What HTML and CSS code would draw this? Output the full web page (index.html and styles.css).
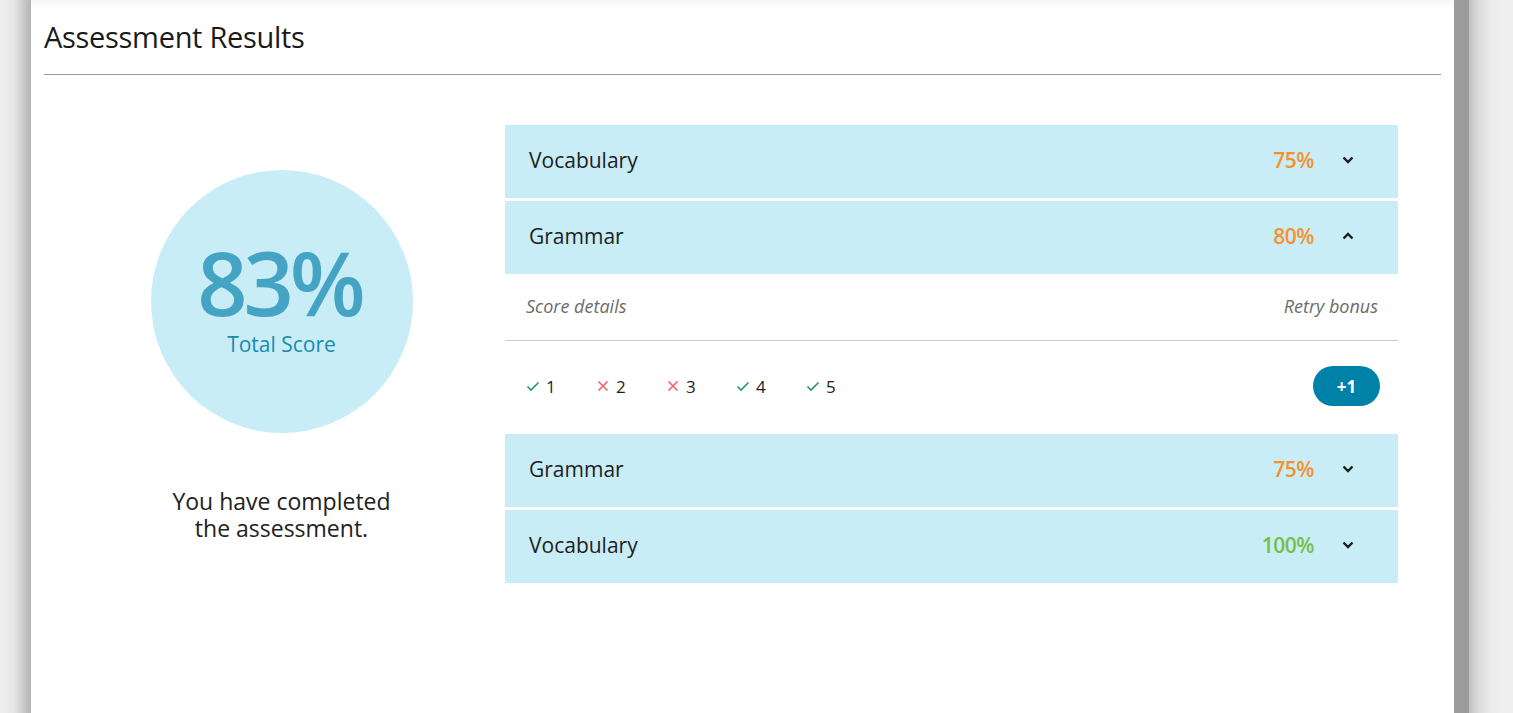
FILE: index.html
```html
<!DOCTYPE html>
<html lang="en">
<head>
<meta charset="utf-8">
<title>Assessment Results</title>
<link rel="stylesheet" href="styles.css">
</head>
<body>
<div class="stage">
  <div class="gutter gutter-left"></div>
  <main class="panel">
    <h1 class="title">Assessment Results</h1>
    <div class="results">
      <section class="summary">
        <div class="score-circle">
          <div class="score-value">83%</div>
          <div class="score-label">Total Score</div>
        </div>
        <p class="complete-msg">You have completed<br>the assessment.</p>
      </section>

      <section class="accordion">
        <div class="acc-row">
          <span class="acc-name">Vocabulary</span>
          <span class="acc-pct pct-orange">75%</span>
          <svg class="chev" viewBox="0 0 12 8"><path d="M1.5 1.5 L6 6 L10.5 1.5"/></svg>
        </div>
        <div class="acc-row">
          <span class="acc-name">Grammar</span>
          <span class="acc-pct pct-orange">80%</span>
          <svg class="chev" viewBox="0 0 12 8"><path d="M1.5 6.5 L6 2 L10.5 6.5"/></svg>
        </div>
        <div class="acc-body">
          <div class="detail-head">
            <span>Score details</span>
            <span>Retry bonus</span>
          </div>
          <div class="detail-items">
            <ul class="answers">
              <li><svg class="mark ok" viewBox="0 0 14 14"><path d="M1.5 7.5 L5 11 L12.5 3.5"/></svg>1</li>
              <li><svg class="mark bad" viewBox="0 0 14 14"><path d="M2.5 2.5 L11.5 11.5 M11.5 2.5 L2.5 11.5"/></svg>2</li>
              <li><svg class="mark bad" viewBox="0 0 14 14"><path d="M2.5 2.5 L11.5 11.5 M11.5 2.5 L2.5 11.5"/></svg>3</li>
              <li><svg class="mark ok" viewBox="0 0 14 14"><path d="M1.5 7.5 L5 11 L12.5 3.5"/></svg>4</li>
              <li><svg class="mark ok" viewBox="0 0 14 14"><path d="M1.5 7.5 L5 11 L12.5 3.5"/></svg>5</li>
            </ul>
            <span class="bonus">+1</span>
          </div>
        </div>
        <div class="acc-row">
          <span class="acc-name">Grammar</span>
          <span class="acc-pct pct-orange">75%</span>
          <svg class="chev" viewBox="0 0 12 8"><path d="M1.5 1.5 L6 6 L10.5 1.5"/></svg>
        </div>
        <div class="acc-row">
          <span class="acc-name">Vocabulary</span>
          <span class="acc-pct pct-green">100%</span>
          <svg class="chev" viewBox="0 0 12 8"><path d="M1.5 1.5 L6 6 L10.5 1.5"/></svg>
        </div>
      </section>
    </div>
  </main>
  <div class="edge"></div>
  <div class="gutter gutter-right"></div>
</div>
</body>
</html>
```

FILE: styles.css
```css
html, body {
  margin: 0;
  padding: 0;
  height: 100%;
}

body {
  background: #efefef;
  font-family: "Open Sans", "Liberation Sans", sans-serif;
  color: #222;
  overflow: hidden;
}

.stage {
  display: flex;
  height: 713px;
}

.gutter {
  flex: none;
}

.gutter-left {
  width: 31px;
  background: linear-gradient(to right, #efefef 0%, #e6e6e6 45%, #b4b4b4 100%);
}

.gutter-right {
  flex: 1;
  background: linear-gradient(to right, #c2c2c2 0px, #dcdcdc 10px, #ebebeb 22px, #efefef 32px);
}

.edge {
  flex: none;
  width: 15px;
  background: #9b9b9b;
}

.panel {
  flex: none;
  width: 1423px;
  background: linear-gradient(to bottom, #f7f7f7 0px, #fbfbfb 5px, #ffffff 8px);
  padding: 0 13px;
  box-sizing: border-box;
}

.title {
  margin: 0;
  padding: 19px 0 19px;
  font-size: 29px;
  font-weight: 400;
  line-height: 36px;
  letter-spacing: -0.3px;
  color: #1a1a1a;
  border-bottom: 1px solid #9a9a9a;
}

.results {
  display: flex;
  align-items: flex-start;
  padding: 50px 43px 0 0;
}

.summary {
  width: 447px;
  margin: 45px 0 0 14px;
  display: flex;
  flex-direction: column;
  align-items: center;
}

.score-circle {
  width: 262px;
  height: 263px;
  box-sizing: border-box;
  padding-top: 80px;
  border-radius: 50%;
  background: #c9edf6;
  display: flex;
  flex-direction: column;
  align-items: center;
}

.score-value {
  font-size: 88px;
  font-weight: 600;
  line-height: 64px;
  color: #45a4c4;
  letter-spacing: -4px;
  padding-right: 4px;
}

.score-label {
  font-size: 21px;
  line-height: 24px;
  color: #1b8ab0;
  margin-top: 18px;
}

.complete-msg {
  margin: 55px 0 0;
  text-align: center;
  font-size: 23px;
  line-height: 27px;
  color: #222;
}

.accordion {
  flex: 1;
  display: flex;
  flex-direction: column;
  gap: 3px;
}

.acc-row {
  height: 73px;
  box-sizing: border-box;
  background: #c9edf6;
  display: flex;
  align-items: center;
  padding: 0 44px 4px 24px;
}

.acc-name {
  flex: 1;
  font-size: 21px;
  color: #1d1d1d;
}

.acc-pct {
  font-size: 21px;
  font-weight: 600;
  letter-spacing: -0.5px;
}

.pct-orange { color: #f7902e; }
.pct-green { color: #75be48; }

.chev {
  width: 12px;
  height: 8px;
  margin-left: 28px;
  fill: none;
  stroke: #1d1d1d;
  stroke-width: 2.4;
}

.acc-body {
  margin-top: -3px;
  height: 157px;
  display: flex;
  flex-direction: column;
}

.detail-head {
  height: 67px;
  box-sizing: border-box;
  display: flex;
  justify-content: space-between;
  align-items: center;
  padding: 0 20px 2px 21px;
  border-bottom: 1px solid #cccccc;
  font-size: 18px;
  font-style: italic;
  color: #6b6b6b;
}

.detail-items {
  flex: 1;
  display: flex;
  align-items: center;
  justify-content: space-between;
  padding: 0 18px 0 21px;
}

.answers {
  list-style: none;
  margin: 0;
  padding: 0;
  display: flex;
}

.answers li {
  width: 70px;
  display: flex;
  align-items: center;
  font-size: 17px;
  color: #1d1d1d;
}

.mark {
  width: 14px;
  height: 14px;
  margin-right: 6px;
  fill: none;
  stroke-width: 1.6;
}

.mark.ok { stroke: #23996a; }
.mark.bad { stroke: #f0606c; }

.bonus {
  width: 67px;
  height: 40px;
  border-radius: 20px;
  background: #0081a8;
  color: #ffffff;
  font-weight: 700;
  font-size: 17px;
  display: flex;
  align-items: center;
  justify-content: center;
}
```
